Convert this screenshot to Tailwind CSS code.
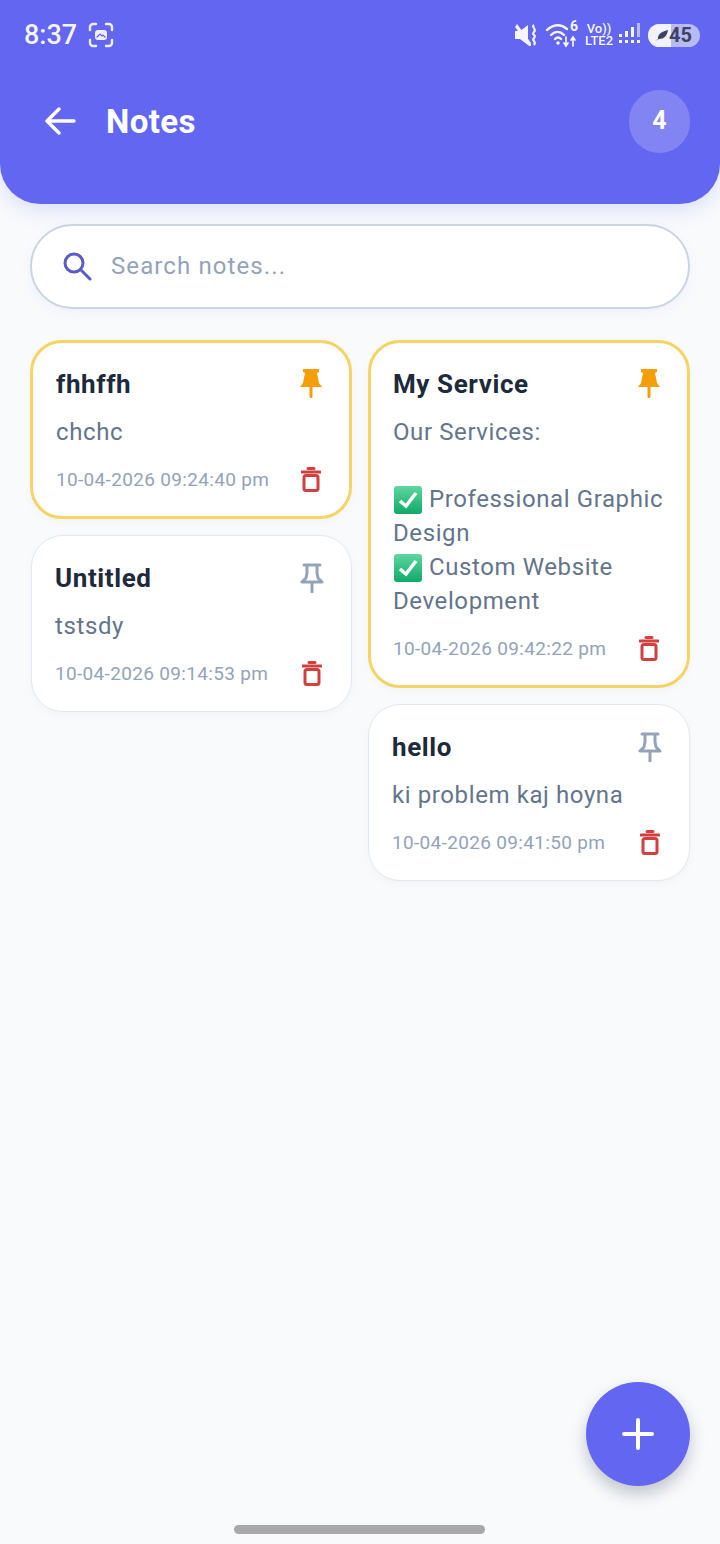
<!DOCTYPE html>
<html lang="en">
<head>
    <meta charset="UTF-8">
    <meta name="viewport" content="width=device-width, initial-scale=1.0">
    <script src="https://cdn.jsdelivr.net/npm/@tailwindcss/browser@4"></script>
    <title>Notes</title>
</head>
<body class="overflow-hidden bg-[#f8fafc] font-['Roboto',sans-serif]">
    <div class="relative w-[720px] h-[1544px] flex flex-col">

        <!-- header -->
        <header class="h-[204px] shrink-0 bg-[#6366f1] rounded-b-[40px] shadow-[0_6px_20px_rgba(99,102,241,0.18)] text-white">
            <div class="h-[70px] pl-[24px] pr-[20px] flex items-center justify-between">
                <div class="flex items-center gap-[11px]">
                    <span class="text-[27px] leading-none font-medium text-white/95">8:37</span>
                    <svg class="w-[26px] h-[26px]" viewBox="0 0 26 26" fill="none" stroke="#eef0ff" stroke-width="2.4" stroke-linecap="round">
                        <path d="M2 8V5a3 3 0 0 1 3-3h3M18 2h3a3 3 0 0 1 3 3v3M24 18v3a3 3 0 0 1-3 3h-3M8 24H5a3 3 0 0 1-3-3v-3"/>
                        <rect x="7" y="8" width="12" height="10" rx="3" fill="#eef0ff" stroke="none"/>
                        <path d="M9 15l3-3 2 2 1-1 2 2" stroke="#6366f1" stroke-width="1.2"/>
                    </svg>
                </div>
                <div class="flex items-center gap-[7px]">
                    <svg class="w-[25px] h-[24px] mr-[-1px]" viewBox="0 0 25 24" fill="#f4f5ff">
                        <path d="M0 8h5l8-6v20l-8-6H0z"/>
                        <path d="M2 1l14 19v3h-2L0 4z"/>
                        <path d="M19 2c-3 2 3 4 0 7s3 3 0 6 3 3 0 7" fill="none" stroke="#f4f5ff" stroke-width="2.200"/>
                    </svg>
                    <svg class="w-[33px] h-[26px] overflow-visible" viewBox="0 0 33 26" fill="none" stroke="#f4f5ff" stroke-width="2.400" stroke-linecap="round">
                        <path d="M1 8c7-6 14-6 20-1M5 13c4-4 9-4 13 0M9 17c2-2 4-2 6 0"/>
                        <circle cx="12" cy="21" r="1.800" fill="#f4f5ff" stroke="none"/>
                        <path d="M20 15v9M18 21l2 3 2-3M27 24v-9M25 18l2-3 2 3" stroke-width="1.700"/>
                        <text x="24" y="9" fill="#f4f5ff" stroke="none" font-size="14" font-weight="700">6</text>
                    </svg>
                    <div class="flex flex-col items-center text-[13px] leading-[12px] font-medium text-white/95 w-[26px]">
                        <span>Vo))</span>
                        <span>LTE2</span>
                    </div>
                    <svg class="w-[22px] h-[22px] mt-[-2px]" viewBox="0 0 22 22" fill="#f4f5ff">
                        <rect x="0" y="11" width="3" height="3"/><rect x="0" y="17" width="3" height="3"/>
                        <rect x="6" y="8" width="3" height="6"/><rect x="6" y="17" width="3" height="3"/>
                        <rect x="12" y="4" width="3" height="10"/><rect x="12" y="17" width="3" height="3"/>
                        <rect x="18" y="0" width="3" height="14" opacity="0.6"/><rect x="18" y="17" width="3" height="3"/>
                    </svg>
                    <div class="relative w-[52px] h-[23px] rounded-full bg-[#b7baf3] overflow-hidden flex items-center">
                        <div class="absolute left-0 top-0 w-[23px] h-[23px] bg-[#f1f2fe]"></div>
                        <svg class="relative ml-[7px] w-[13px] h-[11px]" viewBox="0 0 13 11" fill="#3f4361"><path d="M0 11l3-2c-1-5 5-8 10-9-1 6-4 9-9 9z"/></svg>
                        <span class="relative ml-[1px] text-[20px] leading-none font-bold text-[#3f4361]">45</span>
                    </div>
                </div>
            </div>
            <div class="h-[60px] mt-[21px] pl-[45px] pr-[30px] flex items-center justify-between">
                <div class="flex items-center gap-[30px]">
                    <svg class="w-[31px] h-[30px]" viewBox="0 0 31 30" fill="none" stroke="#fff" stroke-width="3.400" stroke-linecap="round" stroke-linejoin="round">
                        <path d="M29 15H2M14 3L2 15l12 12"/>
                    </svg>
                    <h1 class="text-[33px] leading-none font-bold tracking-[0.4px]">Notes</h1>
                </div>
                <div class="w-[61px] h-[63px] rounded-full bg-white/20 flex items-center justify-center text-[25px] font-bold">4</div>
            </div>
        </header>

        <main class="px-[30px] pt-[20px]">
            <!-- search -->
            <div class="h-[85px] mb-[-1px] pb-[1px] rounded-full bg-white border-2 border-[#cbd5e1] shadow-[0_4px_12px_rgba(99,102,241,0.06)] flex items-center pl-[30px] gap-[19px]">
                <svg class="w-[30px] h-[30px]" viewBox="0 0 30 30" fill="none" stroke="#5b5bc8" stroke-width="3" stroke-linecap="round">
                    <circle cx="12" cy="12" r="9"/>
                    <path d="M19 19l9 9"/>
                </svg>
                <span class="text-[24px] tracking-[1.1px] text-[#94a3b8]">Search notes...</span>
            </div>

            <!-- notes -->
            <div class="mt-[32px] grid grid-cols-2 gap-x-[16px] items-start">
                <div class="flex flex-col gap-[16px]">
                    <article class="h-[179px] rounded-[32px] bg-white border-[3px] border-[#f6d365] pl-[23px] pr-[22px] pt-[23px] shadow-[0_3px_8px_rgba(15,23,42,0.03)]">
                        <div class="h-[36px] flex items-center justify-between">
                            <h2 class="text-[26px] leading-none font-bold tracking-[0.6px] text-[#1e293b]">fhhffh</h2>
                            <svg class="w-[24px] h-[30px] mr-[4px] mt-[-3px]" viewBox="0 0 24 30" fill="#f59e0b"><path d="M4 1h16v3l-2 1 2 10 3 4H1l3-4 2-10-2-1z"/><rect x="10.500" y="18" width="3" height="12" rx="1.500"/></svg>
                        </div>
                        <p class="mt-[13px] text-[24px] leading-[34px] tracking-[0.6px] text-[#64748b]">chchc</p>
                        <div class="mt-[14px] h-[34px] flex items-center justify-between">
                            <span class="text-[19px] tracking-[0.33px] text-[#94a3b8]">10-04-2026 09:24:40 pm</span>
                            <svg class="w-[20px] h-[25px] mr-[6px] mt-[-2px]" viewBox="0 0 20 25" fill="none" stroke="#d23f3f" stroke-width="3" stroke-linecap="round" stroke-linejoin="round"><path d="M1 5h18M7 1.500h6"/><rect x="3" y="8.500" width="14" height="15" rx="2"/></svg>
                        </div>
                    </article>
                    <article class="h-[177px] ml-[1px] rounded-[32px] bg-white border border-[#e2e8f0] pl-[23px] pr-[23px] pt-[24px] shadow-[0_3px_8px_rgba(15,23,42,0.03)]">
                        <div class="h-[36px] flex items-center justify-between">
                            <h2 class="text-[26px] leading-none font-bold tracking-[0.6px] text-[#1e293b]">Untitled</h2>
                            <svg class="w-[24px] h-[30px] mr-[4px]" viewBox="0 0 24 30" fill="none" stroke="#94a3b8" stroke-width="3" stroke-linejoin="round" stroke-linecap="round"><path d="M4 2h16M7 2v8l-1 5-4 4h20l-4-4-1-5V2M12 19v10"/></svg>
                        </div>
                        <p class="mt-[13px] text-[24px] leading-[34px] tracking-[0.6px] text-[#64748b]">tstsdy</p>
                        <div class="mt-[14px] h-[34px] flex items-center justify-between">
                            <span class="text-[19px] tracking-[0.33px] text-[#94a3b8]">10-04-2026 09:14:53 pm</span>
                            <svg class="w-[20px] h-[25px] mr-[6px] mt-[-2px]" viewBox="0 0 20 25" fill="none" stroke="#d23f3f" stroke-width="3" stroke-linecap="round" stroke-linejoin="round"><path d="M1 5h18M7 1.500h6"/><rect x="3" y="8.500" width="14" height="15" rx="2"/></svg>
                        </div>
                    </article>
                </div>
                <div class="flex flex-col gap-[16px]">
                    <article class="h-[348px] rounded-[32px] bg-white border-[3px] border-[#f6d365] pl-[22px] pr-[22px] pt-[23px] shadow-[0_3px_8px_rgba(15,23,42,0.03)]">
                        <div class="h-[36px] flex items-center justify-between">
                            <h2 class="text-[26px] leading-none font-bold tracking-[0.6px] text-[#1e293b]">My Service</h2>
                            <svg class="w-[24px] h-[30px] mr-[4px] mt-[-3px]" viewBox="0 0 24 30" fill="#f59e0b"><path d="M4 1h16v3l-2 1 2 10 3 4H1l3-4 2-10-2-1z"/><rect x="10.500" y="18" width="3" height="12" rx="1.500"/></svg>
                        </div>
                        <div class="mt-[13px] text-[24px] leading-[34px] tracking-[0.6px] text-[#64748b]">
                            <p class="mb-[33px]">Our Services:</p>
                            <p><svg class="inline-block align-[-3px] my-[-4px] w-[28px] h-[28px] ml-[1px] mr-[7px]" viewBox="0 0 28 28"><defs><linearGradient id="check1" x1="0" y1="0" x2="0" y2="1"><stop offset="0" stop-color="#5fd6a0"/><stop offset="1" stop-color="#0fa968"/></linearGradient></defs><rect width="28" height="28" rx="3" fill="url(#check1)"/><path d="M6 15l6 5 10-13" fill="none" stroke="#fff" stroke-width="3.500"/></svg>Professional Graphic Design</p>
                            <p><svg class="inline-block align-[-3px] my-[-4px] w-[28px] h-[28px] ml-[1px] mr-[7px]" viewBox="0 0 28 28"><rect width="28" height="28" rx="3" fill="url(#check1)"/><path d="M6 15l6 5 10-13" fill="none" stroke="#fff" stroke-width="3.500"/></svg>Custom Website Development</p>
                        </div>
                        <div class="mt-[14px] h-[34px] flex items-center justify-between">
                            <span class="text-[19px] tracking-[0.33px] text-[#94a3b8]">10-04-2026 09:42:22 pm</span>
                            <svg class="w-[20px] h-[25px] mr-[6px] mt-[-2px]" viewBox="0 0 20 25" fill="none" stroke="#d23f3f" stroke-width="3" stroke-linecap="round" stroke-linejoin="round"><path d="M1 5h18M7 1.500h6"/><rect x="3" y="8.500" width="14" height="15" rx="2"/></svg>
                        </div>
                    </article>
                    <article class="h-[177px] rounded-[32px] bg-white border border-[#e2e8f0] pl-[23px] pr-[23px] pt-[24px] shadow-[0_3px_8px_rgba(15,23,42,0.03)]">
                        <div class="h-[36px] flex items-center justify-between">
                            <h2 class="text-[26px] leading-none font-bold tracking-[0.6px] text-[#1e293b]">hello</h2>
                            <svg class="w-[24px] h-[30px] mr-[4px]" viewBox="0 0 24 30" fill="none" stroke="#94a3b8" stroke-width="3" stroke-linejoin="round" stroke-linecap="round"><path d="M4 2h16M7 2v8l-1 5-4 4h20l-4-4-1-5V2M12 19v10"/></svg>
                        </div>
                        <p class="mt-[13px] text-[24px] leading-[34px] tracking-[0.6px] text-[#64748b]">ki problem kaj hoyna</p>
                        <div class="mt-[14px] h-[34px] flex items-center justify-between">
                            <span class="text-[19px] tracking-[0.33px] text-[#94a3b8]">10-04-2026 09:41:50 pm</span>
                            <svg class="w-[20px] h-[25px] mr-[6px] mt-[-2px]" viewBox="0 0 20 25" fill="none" stroke="#d23f3f" stroke-width="3" stroke-linecap="round" stroke-linejoin="round"><path d="M1 5h18M7 1.500h6"/><rect x="3" y="8.500" width="14" height="15" rx="2"/></svg>
                        </div>
                    </article>
                </div>
            </div>
        </main>

        <!-- floating add button -->
        <button class="absolute left-[586px] top-[1382px] w-[104px] h-[104px] rounded-full bg-[#6366f1] shadow-[0_8px_16px_rgba(30,41,59,0.25)] flex items-center justify-center">
            <svg class="w-[32px] h-[32px]" viewBox="0 0 32 32" fill="none" stroke="#fff" stroke-width="4" stroke-linecap="round"><path d="M16 2v28M2 16h28"/></svg>
        </button>

        <!-- gesture bar -->
        <div class="absolute left-[234px] top-[1525px] w-[251px] h-[9px] rounded-full bg-[#a9a9a9]"></div>
    </div>
</body>
</html>
